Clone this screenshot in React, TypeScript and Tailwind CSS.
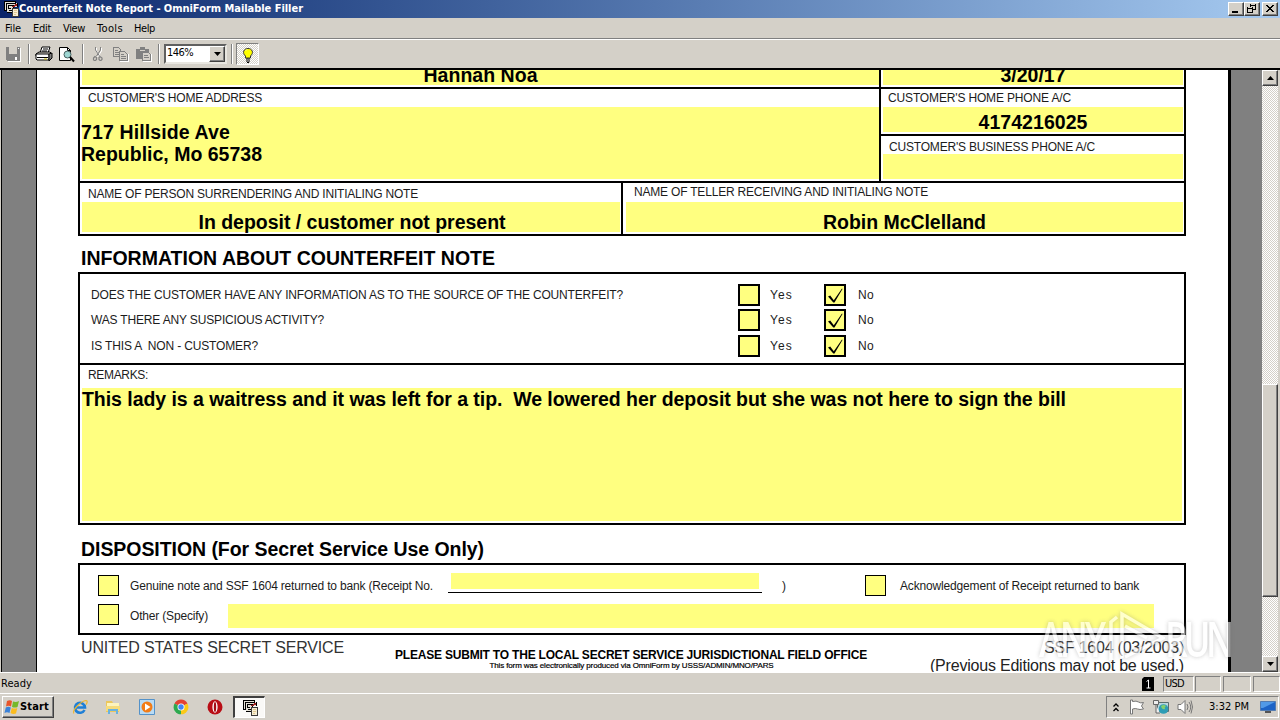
import { useLayoutEffect, useRef, useState } from "react";
import type { ReactNode } from "react";

/** One line of text whose letter spacing is computed so that it fills `w` pixels. */
function Fit({ w, className = "", children }: { w: number; className?: string; children: string }) {
  const ref = useRef<HTMLSpanElement>(null);
  const [spacing, setSpacing] = useState(0);
  useLayoutEffect(() => {
    const el = ref.current;
    if (!el) return;
    el.style.letterSpacing = "0px";
    const natural = el.getBoundingClientRect().width;
    setSpacing((w - natural) / children.length);
    el.style.letterSpacing = `${(w - natural) / children.length}px`;
  }, [w, children]);
  return (
    <span ref={ref} className={`inline-block shrink-0 whitespace-pre ${className}`} style={{ letterSpacing: spacing }}>
      {children}
    </span>
  );
}

const LABEL = "text-[12px] leading-[18px] text-[#1c1c1c]";
const ENTRY = "text-[19.5px] leading-[23px] font-bold";
const SYS = "font-['DejaVu_Sans_Condensed','DejaVu_Sans',sans-serif] text-[11px] leading-[14px]";
const RAISED =
  "border border-t-white border-l-white border-r-[#404040] border-b-[#404040] bg-[#d4d0c8] shadow-[inset_-1px_-1px_0_#808080]";
const SUNKEN = "border border-t-[#808080] border-l-[#808080] border-r-white border-b-white";
const TRACK = "bg-[repeating-conic-gradient(#fff_0_25%,#d4d0c8_0_50%)] bg-[length:2px_2px]";

function AppIcon({ className = "" }: { className?: string }) {
  return (
    <svg viewBox="0 0 16 16" className={className} shapeRendering="crispEdges">
      <path d="M1 0h11v2h3v4h-4v6H4v-2H1z" fill="#e4e0d6" />
      <path d="M1.500 10V.5H12M3.500 9V2.500H13M5.500 8V4.500h5M1 9.500h3M3.500 11.500H9M5 7.500h3M5.500 9.500h3" stroke="#000" fill="none" />
      <path d="M12.500 0v3M14.500 2v4M10.500 4v3" stroke="#000" fill="none" />
      <path d="M9 5.500h3M11 4.500h3M12 3.500h2" stroke="#a02020" />
      <path d="M9.500 7.500h6v8h-6z" fill="#f6edd4" stroke="#3a3a3a" />
      <path d="M11 9.500h3M11 11.500h3M11 13.500h2" stroke="#e0c890" />
    </svg>
  );
}

function WinButton({ children, className = "" }: { children: ReactNode; className?: string }) {
  return (
    <div className={`h-[14px] w-[16px] ${RAISED} ${className}`}>
      <svg viewBox="0 0 14 12" className="block h-3 w-[14px]" fill="none" stroke="#000" shapeRendering="crispEdges">
        {children}
      </svg>
    </div>
  );
}

function Title() {
  return (
    <header className="flex h-[18px] shrink-0 items-center bg-linear-to-r from-[#0a246a] to-[#a6caf0] pr-[2px] pl-[3px]">
      <AppIcon className="h-4 w-4" />
      <Fit w={284} className="font-['DejaVu_Sans_Condensed',sans-serif] text-[11px] leading-[18px] font-bold text-white">
        Counterfeit Note Report - OmniForm Mailable Filler
      </Fit>
      <div className="ml-auto flex">
        <WinButton>
          <path d="M3 9h6" strokeWidth="2" />
        </WinButton>
        <WinButton>
          <path d="M5 2h6M5.500 1v3M10.500 1v6M8 6.500h3M2 5h6M2.500 4v6M7.500 4v6M2 9.500h6" />
        </WinButton>
        <WinButton className="ml-[2px]">
          <path d="M3 2l7 7M4 2l7 7M10 2l-7 7M11 2l-7 7" shapeRendering="auto" />
        </WinButton>
      </div>
    </header>
  );
}

function MenuBar() {
  return (
    <nav className={`flex h-[21px] shrink-0 items-center border-b border-[#808080] pt-px pl-[5px] text-black ${SYS}`}>
      <Fit w={16}>File</Fit>
      <Fit w={18} className="ml-3">Edit</Fit>
      <Fit w={22} className="ml-3">View</Fit>
      <Fit w={26} className="ml-3">Tools</Fit>
      <Fit w={21} className="ml-[11px]">Help</Fit>
    </nav>
  );
}

function Separator({ className = "" }: { className?: string }) {
  return <div className={`h-5 w-[2px] border-r border-l border-r-white border-l-[#808080] ${className}`} />;
}

function ToolBar() {
  return (
    <div className="flex h-[29px] shrink-0 items-center border-t border-white pl-[5px]">
      <svg viewBox="0 0 16 16" className="h-4 w-4" shapeRendering="crispEdges">
        <path d="M1 1h14v14H2l-1-1z" fill="#808080" />
        <path d="M4 1h8v7H4z" fill="#d4d0c8" />
        <path d="M5 10h7v4H5z" fill="#808080" />
        <path d="M10 11h2v3h-2zM13 2h1v1h-1z" fill="#fff" />
        <path d="M15.500 2v13.500H3" stroke="#fff" fill="none" />
      </svg>
      <Separator className="ml-[7px]" />
      <svg viewBox="0 0 18 16" className="ml-[5px] h-4 w-[18px]" strokeLinejoin="round">
        <path d="M5 7l2-6h8l-2 6z" fill="#fff" stroke="#000" />
        <path d="M8 3h5M7 5h5" stroke="#000" />
        <path d="M1 8l3-2h11l2 2-3 2H1z" fill="#d4d0c8" stroke="#000" />
        <path d="M1 8h13v6H2l-1-1z" fill="#fff" stroke="#000" />
        <path d="M14 8l3-1v5l-3 3z" fill="#808080" stroke="#000" />
        <path d="M2 11.500h11" stroke="#000" />
        <path d="M9 13h3" stroke="#c9b800" />
      </svg>
      <svg viewBox="0 0 17 17" className="ml-[5px] h-[17px] w-[17px]">
        <path d="M1.500 1.500h8l3 3v10h-11z" fill="#fff" stroke="#000" />
        <path d="M9.500 1.500v3h3" fill="none" stroke="#000" />
        <circle cx="9.500" cy="8.500" r="3.500" fill="#9ed6d2" stroke="#47605f" />
        <path d="M12 11l4 4.500" stroke="#000" strokeWidth="2" />
      </svg>
      <Separator className="ml-[7px]" />
      <svg viewBox="0 0 16 16" className="ml-[6px] h-4 w-4" fill="none">
        <path d="M6.500 2v3l4 6M11.500 2v3l-4 6" stroke="#fff" />
        <path d="M5.500 1v3l4 6M10.500 1v3l-4 6" stroke="#808080" />
        <path d="M5 10.500l-1.500 1.500v2l1 .5h1l1-1v-2zM10 10.500l-1 1v2l1 1h1l1-1v-1.500z" stroke="#808080" strokeWidth="1.200" />
      </svg>
      <svg viewBox="0 0 17 16" className="ml-[6px] h-4 w-[17px]" fill="#d4d0c8" stroke="#808080" shapeRendering="crispEdges">
        <path d="M1.500 1.500h5l2 2v7h-7z" />
        <path d="M3 4.500h3M3 6.500h4M3 8.500h4" />
        <path d="M7.500 5.500h5l3 3v6h-8z" />
        <path d="M9 8.500h3M9 10.500h5M9 12.500h5" />
        <path d="M16.500 8v7.500H8" stroke="#fff" fill="none" />
      </svg>
      <svg viewBox="0 0 17 16" className="ml-[6px] h-4 w-[17px]" shapeRendering="crispEdges">
        <path d="M1 3h4V1h5v2h4v10H1z" fill="#808080" />
        <path d="M5 4h5" stroke="#d4d0c8" />
        <path d="M7.500 6.500h6l2 2v6h-8z" fill="#d4d0c8" stroke="#808080" />
        <path d="M9 9.500h4M9 11.500h5" stroke="#808080" />
        <path d="M16.500 8v7.500H8" stroke="#fff" fill="none" />
      </svg>
      <Separator className="ml-[6px]" />
      <div className="ml-[4px] flex h-5 w-[63px] border-2 border-t-[#606060] border-r-[#e8e6e0] border-b-[#e8e6e0] border-l-[#606060] bg-white">
        <Fit w={27} className={`pl-[1px] ${SYS}`}>146%</Fit>
        <div className={`ml-auto flex h-4 w-4 items-center justify-center ${RAISED}`}>
          <svg viewBox="0 0 7 4" className="h-1 w-[7px]">
            <path d="M0 0h7L3.500 4z" />
          </svg>
        </div>
      </div>
      <Separator className="ml-[4px]" />
      <div className={`ml-[3px] flex h-[22px] w-[23px] items-center justify-center ${SUNKEN} ${TRACK}`}>
        <svg viewBox="0 0 12 16" className="mt-[2px] h-4 w-3">
          <path d="M3.500 9C0 6 1.500 1.500 6 1.500S12 6 8.500 9v2h-5z" fill="#ffff00" stroke="#333" />
          <path d="M4 3.500l1-1" stroke="#fff" />
          <path d="M4 12h4M4 14h4M5 15.500h2" stroke="#000" />
        </svg>
      </div>
    </div>
  );
}

function Yellow({ className = "", children }: { className?: string; children?: ReactNode }) {
  return <div className={`bg-[#ffff80] ${className}`}>{children}</div>;
}

function PartyTable() {
  return (
    <section className="border-x-2 border-b-2 border-black">
      <div className="flex h-[19px] border-b-2 border-black">
        <div className="w-[799px] pl-[2px]">
          <Yellow className="flex h-[15px] w-[797px] justify-center">
            <Fit w={114} className={`-mt-[6px] ${ENTRY}`}>Hannah Noa</Fit>
          </Yellow>
        </div>
        <div className="flex-1 border-l-2 border-black pl-[2px]">
          <Yellow className="flex h-[15px] w-[300px] justify-center">
            <Fit w={65} className={`-mt-[6px] ${ENTRY}`}>3/20/17</Fit>
          </Yellow>
        </div>
      </div>
      <div className="flex h-[94px] border-b-2 border-black">
        <div className="w-[799px] pl-[1px]">
          <div className="flex h-[18px] pl-[7px]">
            <Fit w={174} className={LABEL}>CUSTOMER'S HOME ADDRESS</Fit>
          </div>
          <Yellow className="ml-[1px] flex h-[72px] w-[797px] flex-col items-start pt-[14px]">
            <Fit w={149} className={`-ml-[1px] ${ENTRY}`}>717 Hillside Ave</Fit>
            <Fit w={181} className={`-mt-px -ml-[1px] ${ENTRY}`}>Republic, Mo 65738</Fit>
          </Yellow>
        </div>
        <div className="flex-1 border-l-2 border-black">
          <div className="h-[47px] border-b-2 border-black pl-[2px]">
            <div className="flex h-[18px] pl-[5px]">
              <Fit w={183} className={LABEL}>CUSTOMER'S HOME PHONE A/C</Fit>
            </div>
            <Yellow className="flex h-[25px] w-[300px] justify-center pt-[4px]">
              <Fit w={109} className={`h-[21px] ${ENTRY}`}>4174216025</Fit>
            </Yellow>
          </div>
          <div className="pl-[2px]">
            <div className="flex h-[18px] pt-[2px] pl-[6px]">
              <Fit w={206} className={LABEL}>CUSTOMER'S BUSINESS PHONE A/C</Fit>
            </div>
            <Yellow className="h-[25px] w-[300px]" />
          </div>
        </div>
      </div>
      <div className="flex h-[51px]">
        <div className="w-[541px] pl-[2px]">
          <div className="flex h-[19px] pt-[2px] pl-[6px]">
            <Fit w={330} className={LABEL}>NAME OF PERSON SURRENDERING AND INITIALING NOTE</Fit>
          </div>
          <Yellow className="flex h-[30px] w-[538px] justify-center pt-[9px] pl-[2px]">
            <Fit w={307} className={`h-[21px] ${ENTRY}`}>In deposit / customer not present</Fit>
          </Yellow>
        </div>
        <div className="flex-1 border-l-2 border-black pl-[3px]">
          <div className="flex h-[19px] pl-[8px]">
            <Fit w={294} className={LABEL}>NAME OF TELLER RECEIVING AND INITIALING NOTE</Fit>
          </div>
          <Yellow className="flex h-[30px] w-[557px] justify-center pt-[9px]">
            <Fit w={163} className={`h-[21px] ${ENTRY}`}>Robin McClelland</Fit>
          </Yellow>
        </div>
      </div>
    </section>
  );
}

function Question({ w, className = "", children }: { w: number; className?: string; children: string }) {
  return (
    <div className={`flex h-[22px] items-center ${className}`}>
      <div className="flex w-[658px] pb-px pl-[11px]">
        <Fit w={w} className={LABEL}>{children}</Fit>
      </div>
      <div className="h-[22px] w-[22px] border-2 border-black bg-[#ffff80]" />
      <Fit w={23} className={`ml-[10px] ${LABEL}`}>Yes</Fit>
      <div className="ml-[31px] h-[22px] w-[22px] border-2 border-black bg-[#ffff80]">
        <svg viewBox="0 0 18 18" className="block h-[18px] w-[18px]">
          <path d="M2 10.500l2.200-1 3.600 4.800L16 2.500l.5.500L8.500 16.500H7.300z" fill="#000" />
        </svg>
      </div>
      <Fit w={16} className={`ml-[12px] ${LABEL}`}>No</Fit>
    </div>
  );
}

function NoteSection() {
  return (
    <section className="h-[253px] border-2 border-black">
      <div className="flex h-[91px] flex-col border-b-2 border-black pt-[10px]">
        <Question w={532}>DOES THE CUSTOMER HAVE ANY INFORMATION AS TO THE SOURCE OF THE COUNTERFEIT?</Question>
        <Question w={233} className="mt-[3px]">WAS THERE ANY SUSPICIOUS ACTIVITY?</Question>
        <Question w={167} className="mt-[4px]">{"IS THIS A  NON - CUSTOMER?"}</Question>
      </div>
      <div className="flex h-[23px] pt-[1px] pl-[8px]">
        <Fit w={60} className={LABEL}>REMARKS:</Fit>
      </div>
      <Yellow className="ml-[2px] flex h-[133px] w-[1100px] items-start">
        <Fit w={984} className={ENTRY}>
          {"This lady is a waitress and it was left for a tip.  We lowered her deposit but she was not here to sign the bill"}
        </Fit>
      </Yellow>
    </section>
  );
}

function Disposition() {
  return (
    <section className="h-[72px] border-2 border-black">
      <div className="flex h-[39px] items-start pt-[8px]">
        <div className="mt-[2px] ml-[18px] h-[21px] w-[21px] border border-black bg-[#ffff80]" />
        <Fit w={303} className={`mt-[4px] ml-[11px] ${LABEL}`}>Genuine note and SSF 1604 returned to bank (Receipt No.</Fit>
        <div className="ml-[15px] flex h-5 w-[314px] justify-center border-b border-black">
          <Yellow className="h-4 w-[308px]" />
        </div>
        <span className={`mt-[4px] ml-[20px] w-[4px] ${LABEL}`}>)</span>
        <div className="mt-[2px] ml-[79px] h-[21px] w-[21px] border border-black bg-[#ffff80]" />
        <Fit w={239} className={`mt-[4px] ml-[14px] ${LABEL}`}>Acknowledgement of Receipt returned to bank</Fit>
      </div>
      <div className="flex">
        <div className="ml-[18px] h-[21px] w-[21px] border border-black bg-[#ffff80]" />
        <Fit w={78} className={`mt-[3px] ml-[11px] ${LABEL}`}>Other (Specify)</Fit>
        <Yellow className="ml-[20px] h-6 w-[926px]" />
      </div>
    </section>
  );
}

function PageFooter() {
  return (
    <div className="flex h-[38px] overflow-hidden">
      <div className="w-[316px] pt-px pl-[3px]">
        <Fit w={263} className="text-[16px] leading-[24px] text-[#333]">UNITED STATES SECRET SERVICE</Fit>
      </div>
      <div className="flex w-[474px] flex-col items-center pt-[13px]">
        <Fit w={472} className="text-[12px] leading-[15px] font-bold">
          PLEASE SUBMIT TO THE LOCAL SECRET SERVICE JURISDICTIONAL FIELD OFFICE
        </Fit>
        <Fit w={285} className="-mt-[2px] pl-px text-[8px] leading-[9px] text-black [-webkit-text-stroke:0.2px_#000]">
          This form was electronically produced via OmniForm by USSS/ADMIN/MNO/PARS
        </Fit>
      </div>
      <div className="flex flex-1 flex-col items-end pt-px pr-[2px]">
        <Fit w={140} className="text-[16px] leading-[24px] text-[#333]">SSF 1604 (03/2003)</Fit>
        <Fit w={254} className="-mt-[2px] text-[16px] leading-[15px] text-[#222]">(Previous Editions may not be used.)</Fit>
      </div>
    </div>
  );
}

function Watermark() {
  return (
    <div className="absolute top-[540px] left-[1039px] flex h-[54px] w-[192px] items-center opacity-60 drop-shadow-[0_0_2px_rgba(110,110,110,0.6)]">
      <Fit w={64} className="origin-center scale-y-[1.35] pt-[4px] font-['Open_Sans',sans-serif] text-[36px] leading-[50px] font-semibold text-white">ANY</Fit>
      <svg viewBox="0 0 62 54" className="h-[54px] w-[62px]" fill="none" stroke="#fff" strokeWidth="3.500">
        <path d="M8 50V12l6-5M19 48V4l41 24-38 19M22 16l22 12" />
      </svg>
      <Fit w={65} className="origin-center scale-y-[1.35] pt-[4px] font-['Open_Sans',sans-serif] text-[36px] leading-[50px] font-semibold text-white">RUN</Fit>
    </div>
  );
}

function Workspace() {
  return (
    <main className="relative flex h-[604px] shrink-0 border-t-2 border-t-black bg-[#d4d0c8] pl-px">
      <div className="flex w-[1261px] overflow-hidden border-l border-black bg-[#808080]">
        <div className="ml-[34px] w-[1195px] border-r-[3px] border-l border-black bg-white pr-[42px] pl-[41px]">
          <PartyTable />
          <h2 className="flex h-[36px] items-center pt-[9px] pl-[3px]">
            <Fit w={414} className={ENTRY}>INFORMATION ABOUT COUNTERFEIT NOTE</Fit>
          </h2>
          <NoteSection />
          <h2 className="flex h-[38px] items-center pt-[10px] pl-[3px]">
            <Fit w={403} className={ENTRY}>DISPOSITION (For Secret Service Use Only)</Fit>
          </h2>
          <Disposition />
          <PageFooter />
        </div>
      </div>
      <div className={`flex h-[602px] w-4 flex-col ${TRACK}`}>
        <div className={`flex h-4 items-center justify-center ${RAISED}`}>
          <svg viewBox="0 0 7 4" className="h-1 w-[7px]">
            <path d="M0 4h7L3.500 0z" />
          </svg>
        </div>
        <div className={`mt-[298px] h-[213px] ${RAISED}`} />
        <div className={`mt-auto flex h-4 items-center justify-center ${RAISED}`}>
          <svg viewBox="0 0 7 4" className="h-1 w-[7px]">
            <path d="M0 0h7L3.500 4z" />
          </svg>
        </div>
      </div>
      <Watermark />
    </main>
  );
}

function StatusBar() {
  return (
    <div className={`flex h-[21px] shrink-0 items-center border-t border-white pt-[2px] pl-[1px] ${SYS}`}>
      <Fit w={31}>Ready</Fit>
      <svg viewBox="0 0 12 14" className="ml-auto h-[14px] w-3">
        <path d="M2 0h10v14H0V2z" />
        <path d="M4.500 4.500L6.500 3v8M4.500 11h4" stroke="#fff" fill="none" />
      </svg>
      <div className={`ml-[9px] flex h-4 w-[31px] items-center ${SUNKEN}`}>
        <Fit w={20} className="pl-px">USD</Fit>
      </div>
      <div className={`ml-[1px] h-4 w-[26px] ${SUNKEN}`} />
      <div className={`ml-[2px] h-4 w-[28px] ${SUNKEN}`} />
      <div className={`ml-[2px] h-4 w-[27px] ${SUNKEN}`} />
    </div>
  );
}

function TaskBar() {
  return (
    <footer className="flex h-[27px] shrink-0 items-center border-t border-white pl-[2px]">
      <div className={`flex h-[22px] w-[52px] items-center pl-[1px] ${RAISED}`}>
        <svg viewBox="0 0 16 16" className="h-4 w-4">
          <path d="M3 2q3-1.500 5 0L7 7.500Q4.500 6 2 7.500z" fill="#e8552a" />
          <path d="M9 2.500q3 1 6-.5L13.500 8Q11 9 8 8z" fill="#76b82a" />
          <path d="M1.800 8.500q2.500-1.500 5 0l-1.300 5.500Q3 12.500.5 14z" fill="#3b82d8" />
          <path d="M7.800 9q3 1 5.500 0L12 14.500Q9 15.500 6.500 14z" fill="#fbbc1e" />
        </svg>
        <Fit w={29} className="font-['DejaVu_Sans_Condensed',sans-serif] text-[11px] leading-4 font-bold">Start</Fit>
      </div>
      <svg viewBox="0 0 16 16" className="ml-[18px] h-4 w-4" fill="none">
        <path d="M12.500 11A5 5 0 1 1 13 8.500H4" stroke="#1f7fd6" strokeWidth="2.600" />
        <path d="M2 14.500C-1 12 9 2 14 1.500c2 0 1 3 0 4" stroke="#efb52c" strokeWidth="1.200" />
      </svg>
      <svg viewBox="0 0 16 16" className="ml-[17px] h-4 w-4">
        <path d="M1 2h6l1 2h6v9H1z" fill="#ecc75b" />
        <path d="M2 4h12v4H2z" fill="#fdf4bd" />
        <path d="M1 7h14v5H1z" fill="#f6dc7c" />
        <path d="M3 15v-5h10v5h-2v-3H5v3z" fill="#69b2df" />
      </svg>
      <svg viewBox="0 0 16 16" className="ml-[18px] h-4 w-4">
        <path d="M.5.5h15v15H.5z" fill="#b9dbf4" stroke="#5492c9" />
        <circle cx="8" cy="8" r="5.500" fill="#f27c16" />
        <path d="M6 4.500L11.500 8 6 11.500z" fill="#fff" />
      </svg>
      <svg viewBox="0 0 16 16" className="ml-[18px] h-4 w-4">
        <path d="M8 8L1.500 4.500a7.300 7.300 0 0 1 13 0z" fill="#e34133" />
        <path d="M8 8l6.500-3.500A7.300 7.300 0 0 1 8 15.300z" fill="#fbc916" />
        <path d="M8 8v7.300A7.300 7.300 0 0 1 1.500 4.500z" fill="#2da94f" />
        <circle cx="8" cy="8" r="3.500" fill="#fff" />
        <circle cx="8" cy="8" r="2.700" fill="#4285f4" />
      </svg>
      <svg viewBox="0 0 16 16" className="ml-[18px] h-4 w-4">
        <circle cx="8" cy="8" r="7.500" fill="#b90d15" />
        <ellipse cx="8" cy="8" rx="2.600" ry="5.800" fill="#fff" />
        <ellipse cx="8" cy="8" rx="1.200" ry="5" fill="#a50b13" />
      </svg>
      <div className="ml-[10px] flex h-[22px] w-[32px] items-center justify-center border-t-2 border-r border-b border-l-2 border-t-[#404040] border-r-white border-b-white border-l-[#404040] bg-[#faf9f7]">
        <AppIcon className="h-4 w-4" />
      </div>
      <div className={`mr-[1px] ml-auto flex h-[22px] w-[173px] items-center pl-[6px] ${SUNKEN}`}>
        <svg viewBox="0 0 6 9" className="h-[9px] w-[6px]" fill="none" stroke="#000" strokeWidth="1.300">
          <path d="M.5 3.500L3 1l2.500 2.500M.5 8L3 5.500 5.500 8" />
        </svg>
        <svg viewBox="0 0 16 16" className="ml-[10px] h-4 w-4" fill="#fff" stroke="#777">
          <path d="M1.500 1v14h2V10q3-1 5 0t6 0L12.500 7l2-3.500q-3 1-5-.5t-6-.5V1z" />
        </svg>
        <svg viewBox="0 0 16 16" className="ml-[8px] h-4 w-4">
          <path d="M4.500 3.500h11v9h-11z" fill="#b9d7de" stroke="#5a6e70" />
          <path d="M.5 1.500h5v4h-5zM3 6v8h4" fill="#eee" stroke="#666" />
          <circle cx="10.500" cy="10" r="4.800" fill="#2e9db5" />
          <path d="M8 7q3-2 5 0-2 1-1 3-3 1-4-3" fill="#85d06b" />
        </svg>
        <svg viewBox="0 0 16 16" className="ml-[8px] h-4 w-4" fill="none" stroke="#777">
          <path d="M1 5.500h3L8 1.500v13l-4-4H1z" fill="#fff" />
          <path d="M10 5q2 3 0 6M12 3q3.500 5 0 10M14 1.500q3 6.500 0 13" />
        </svg>
        <Fit w={40} className={`ml-[16px] ${SYS}`}>3:32 PM</Fit>
        <svg viewBox="0 0 16 14" className="ml-[11px] h-[14px] w-4">
          <path d="M.5 1.500h15v9H.5z" fill="#1d63c6" stroke="#537bb0" />
          <path d="M1 2h14L3 8H1z" fill="#5199e7" />
          <path d="M5 11h6v2H5z" fill="#555" />
        </svg>
      </div>
    </footer>
  );
}

export default function App() {
  return (
    <div className="flex h-[720px] w-[1280px] flex-col overflow-hidden bg-[#d4d0c8] font-['Liberation_Sans',Arial,sans-serif] text-black">
      <Title />
      <MenuBar />
      <ToolBar />
      <Workspace />
      <StatusBar />
      <TaskBar />
    </div>
  );
}
